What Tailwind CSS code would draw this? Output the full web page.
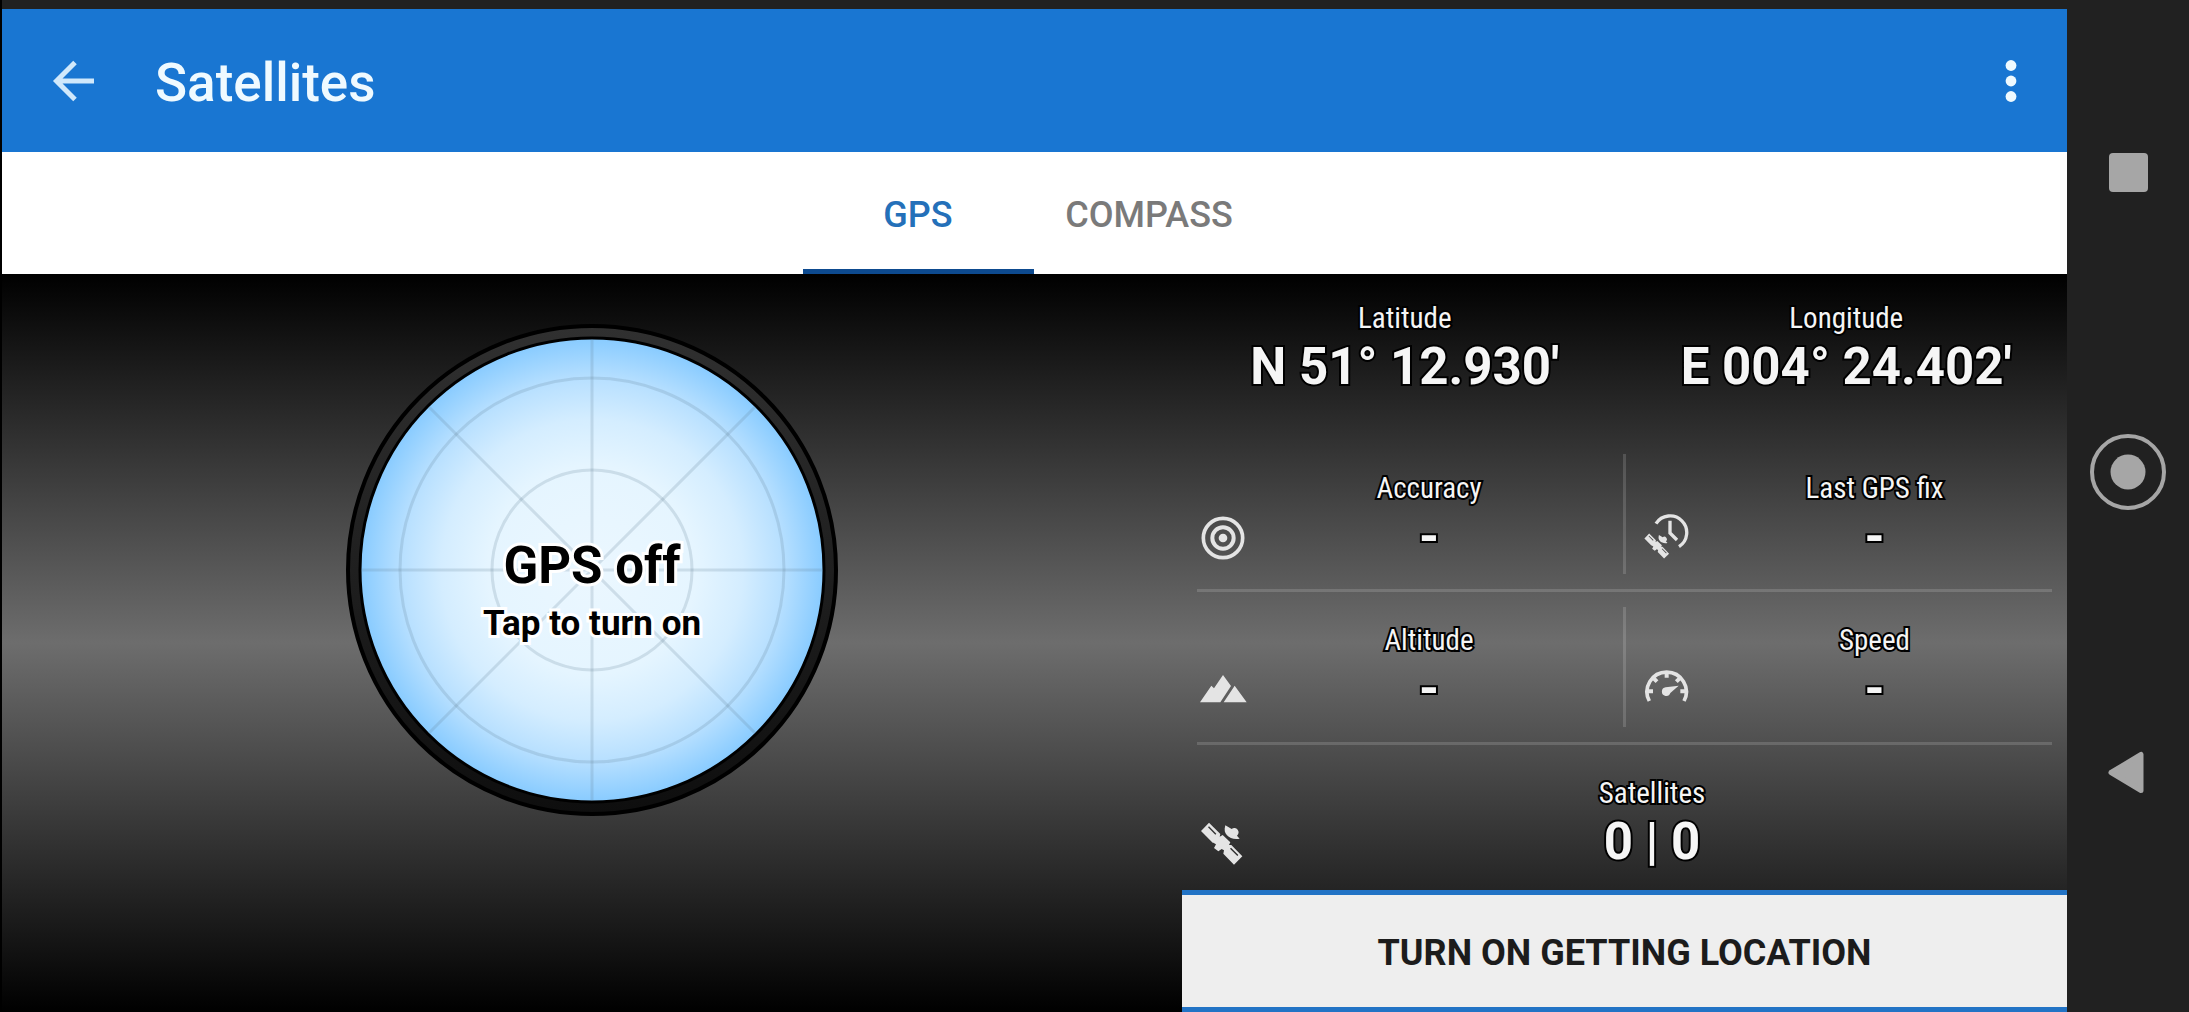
<!DOCTYPE html>
<html lang="en">
<head>
<meta charset="utf-8">
<title>Satellites</title>
<script src="https://cdn.jsdelivr.net/npm/@tailwindcss/browser@4"></script>
</head>
<body class="bg-black font-['Roboto',sans-serif]">
<svg class="hidden" aria-hidden="true">
  <defs>
    <symbol id="satellite" viewBox="24 24 144 144">
      <path fill="currentColor" fill-rule="evenodd" d="M36 60 60 35 94 69 92 77 101 72 124 94 120 102 127 102 160 136 135 161 103 128 105 118 98 114 88 121 75 111 81 100 73 95 71 95ZM57 49 79 71 82 68 60 46ZM123 113 145 135 148 132 126 110Z"/>
      <path fill="currentColor" d="M109 43C105 57 107 66 114 73C122 81 136 87 152 83L144 74A10 10 0 1 0 128 54Z"/>
    </symbol>
  </defs>
</svg>
<div class="flex min-h-screen bg-black pl-0.5">
  <div class="flex min-w-0 flex-1 flex-col">
    <div class="h-[9px] bg-[#212121]"></div>
    <header class="flex h-[143px] items-center bg-[#1976d2] pl-[43px] pr-6 text-[#effaff]">
      <button aria-label="Back" class="mr-12 flex h-16 w-14 items-center justify-center text-[#d0e8fb]">
        <svg class="size-14" viewBox="0 0 56 56" fill="none" stroke="currentColor" stroke-width="5"><path d="M49 28H12M30 9.500 11.500 28 30 46.500"/></svg>
      </button>
      <h1 class="flex-1 pt-1 pl-1.5 text-[53px] leading-[60px] font-medium">Satellites</h1>
      <button aria-label="More options" class="flex h-16 w-16 items-center justify-center">
        <svg class="h-12 w-3" viewBox="0 0 12 48" fill="currentColor"><circle cx="6" cy="8.500" r="5.400"/><circle cx="6" cy="24" r="5.400"/><circle cx="6" cy="39.500" r="5.400"/></svg>
      </button>
    </header>
    <nav class="flex h-[122px] justify-center bg-white pr-0.5 text-[36px]">
      <a href="#gps" class="flex w-[231px] items-center justify-center border-b-5 border-[#0d4a8f] pt-2 font-medium text-[#2470b9]">GPS</a>
      <a href="#compass" class="flex w-[231px] items-center justify-center border-b-5 border-white pt-2 font-medium text-[#7a7a7a]">COMPASS</a>
    </nav>
    <main class="flex flex-1 bg-linear-to-b/srgb from-black via-[#6d6d6d] to-black">
      <section class="flex flex-4 items-start justify-center pt-[50px]">
        <button class="grid size-[492px] place-items-center">
          <svg class="col-start-1 row-start-1 size-full" viewBox="-246 -246 492 492" aria-hidden="true">
            <defs>
              <radialGradient id="sky"><stop offset="0" stop-color="#ebf7ff"/><stop offset=".45" stop-color="#e5f5ff"/><stop offset=".65" stop-color="#d4edff"/><stop offset=".82" stop-color="#b8e0ff"/><stop offset="1" stop-color="#88cbff"/></radialGradient>
              <linearGradient id="rim" x2="0" y2="1"><stop offset="0" stop-color="#303030"/><stop offset="1" stop-color="#0e0e0e"/></linearGradient>
            </defs>
            <circle r="244" fill="url(#rim)" stroke="#000" stroke-width="4"/>
            <circle r="232" fill="url(#sky)" stroke="#000" stroke-width="3"/>
            <g fill="none" stroke="#5f7f93" stroke-opacity=".2" stroke-width="3">
              <circle r="100"/><circle r="192"/>
              <path d="M0-230V230M-230 0H230M-163-163 163 163M-163 163 163-163"/>
            </g>
          </svg>
          <span class="col-start-1 row-start-1 flex flex-col items-center pt-12 font-bold text-black [-webkit-text-stroke:6px_#fff] [paint-order:stroke_fill]">
            <span class="text-[51px] leading-[60px]">GPS off</span>
            <span class="text-[35px] leading-[56px]">Tap to turn on</span>
          </span>
        </button>
      </section>
      <section class="flex flex-3 flex-col text-[#f5f5f5]">
        <dl class="flex flex-1 flex-col text-center [-webkit-text-stroke:4px_#000] [paint-order:stroke_fill]">
          <div class="grid h-[165px] grid-cols-2 pt-[26px] pl-0.5">
            <div>
              <dt class="font-['Roboto_Condensed','Liberation_Sans_Narrow','Roboto',sans-serif] text-[29px] leading-[37px]">Latitude</dt>
              <dd class="text-[51px] leading-[60px] font-bold">N 51° 12.930'</dd>
            </div>
            <div>
              <dt class="font-['Roboto_Condensed','Liberation_Sans_Narrow','Roboto',sans-serif] text-[29px] leading-[37px]">Longitude</dt>
              <dd class="text-[51px] leading-[60px] font-bold">E 004° 24.402'</dd>
            </div>
          </div>
          <div class="grid h-[150px] grid-cols-[426fr_3px_441fr] pl-[15px]">
            <div class="flex pr-3 pt-[31px] pl-0.5">
              <svg class="mt-11 size-12 text-[#e4e4e4]" viewBox="55 43 144 144" fill="none" stroke="currentColor" aria-hidden="true"><circle cx="127" cy="115" r="59" stroke-width="11"/><circle cx="127" cy="115" r="32" stroke-width="12"/><circle cx="127" cy="115" r="13" fill="currentColor" stroke="none"/></svg>
              <div class="flex-1">
                <dt class="font-['Roboto_Condensed','Liberation_Sans_Narrow','Roboto',sans-serif] text-[29px] leading-[37px]">Accuracy</dt>
                <dd class="text-[51px] leading-[60px] font-bold">-</dd>
              </div>
            </div>
            <div class="my-[15px] bg-white/15"></div>
            <div class="flex pl-4 pr-2 pt-[31px]">
              <svg class="mt-11 size-12 text-[#e4e4e4]" viewBox="36 57 144 144" fill="none" stroke="currentColor" aria-hidden="true"><path stroke-width="10" d="M78 86A50 50 0 1 1 147 155M120 77V114L141 135"/><use href="#satellite" x="36" y="109" width="86" height="86" stroke="none"/></svg>
              <div class="flex-1">
                <dt class="font-['Roboto_Condensed','Liberation_Sans_Narrow','Roboto',sans-serif] text-[29px] leading-[37px]">Last GPS fix</dt>
                <dd class="text-[51px] leading-[60px] font-bold">-</dd>
              </div>
            </div>
          </div>
          <div class="mx-[15px] h-[3px] bg-white/15"></div>
          <div class="grid h-[150px] grid-cols-[426fr_3px_441fr] pl-[15px]">
            <div class="flex pr-3 pt-[30px] pl-0.5">
              <svg class="mt-11 size-12 text-[#e4e4e4]" viewBox="25 48 144 144" fill="currentColor" aria-hidden="true"><path d="M28 157 62 107 70 115 97 75 121 108 89 157ZM99 157 132 107 168 157Z"/></svg>
              <div class="flex-1">
                <dt class="font-['Roboto_Condensed','Liberation_Sans_Narrow','Roboto',sans-serif] text-[29px] leading-[37px]">Altitude</dt>
                <dd class="text-[51px] leading-[60px] font-bold">-</dd>
              </div>
            </div>
            <div class="my-[15px] bg-white/15"></div>
            <div class="flex pl-4 pr-2 pt-[30px]">
              <svg class="mt-11 size-12 text-[#e4e4e4]" viewBox="1356 48 144 144" fill="none" stroke="currentColor" aria-hidden="true"><path stroke-width="11" d="M1378 153A59 59 0 1 1 1482 153"/><path stroke-width="12" d="M1374 124H1389M1486 124H1471M1430 68V83M1391 85 1401 95M1469 85 1459 95"/><path fill="currentColor" stroke="none" d="M1466 107 1441 129A13 13 0 1 1 1427 112Z"/></svg>
              <div class="flex-1">
                <dt class="font-['Roboto_Condensed','Liberation_Sans_Narrow','Roboto',sans-serif] text-[29px] leading-[37px]">Speed</dt>
                <dd class="text-[51px] leading-[60px] font-bold">-</dd>
              </div>
            </div>
          </div>
          <div class="mx-[15px] h-[3px] bg-white/15"></div>
          <div class="flex min-h-[145px] flex-1 pl-[15px] pr-2 pt-[30px]">
            <svg class="mt-11 size-12 text-[#e4e4e4]" stroke="none" aria-hidden="true"><use href="#satellite"/></svg>
            <div class="flex-1">
              <dt class="font-['Roboto_Condensed','Liberation_Sans_Narrow','Roboto',sans-serif] text-[29px] leading-[37px]">Satellites</dt>
              <dd class="text-[51px] leading-[60px] font-bold">0 | 0</dd>
            </div>
          </div>
        </dl>
        <button class="h-[122px] border-y-5 border-[#2273c5] bg-[#eee] pt-1 text-[36px] font-bold text-[#1c1c1c]">TURN ON GETTING LOCATION</button>
      </section>
    </main>
  </div>
  <nav aria-label="System" class="flex w-[122px] flex-col items-center justify-between bg-[#212121] pt-[134px] pb-[202px] text-[#a6a6a6]">
    <button aria-label="Recent apps"><svg class="size-[76px]" viewBox="0 0 76 76" fill="currentColor"><rect x="19" y="19" width="39" height="39" rx="4"/></svg></button>
    <button aria-label="Home"><svg class="size-[76px]" viewBox="0 0 76 76" fill="currentColor"><circle cx="38" cy="38" r="36" fill="none" stroke="currentColor" stroke-width="4"/><circle cx="38" cy="38" r="17.500"/></svg></button>
    <button aria-label="Back"><svg class="size-[76px]" viewBox="0 0 76 76" fill="currentColor" stroke="currentColor" stroke-width="5" stroke-linejoin="round"><path d="M51 20.500V56.500L21 38.500Z"/></svg></button>
  </nav>
</div>
</body>
</html>
